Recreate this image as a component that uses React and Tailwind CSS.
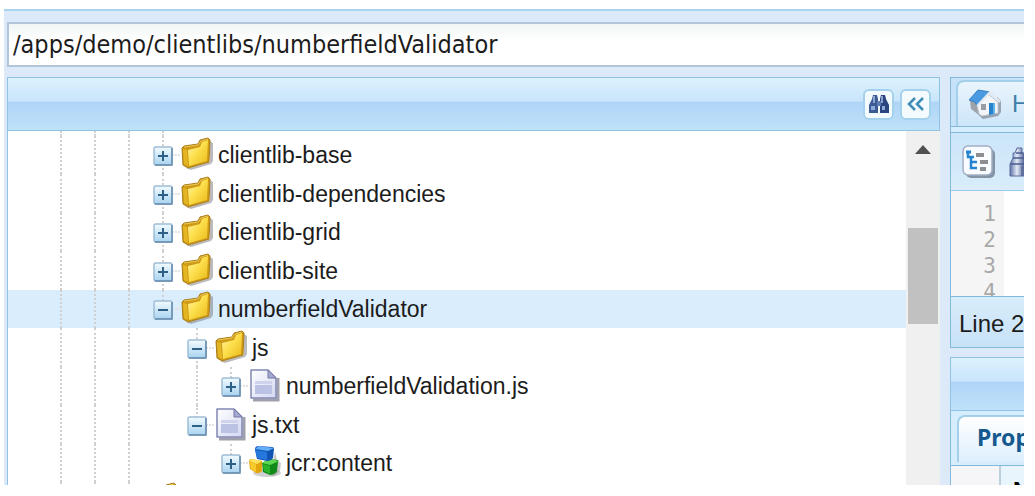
import React from 'react';

const nodes = [
  { id: 'base', name: 'clientlib-base', guides: [1, 1, 1], icon: 'folder', more: true },
  { id: 'deps', name: 'clientlib-dependencies', guides: [1, 1, 1], icon: 'folder', more: true },
  { id: 'grid', name: 'clientlib-grid', guides: [1, 1, 1], icon: 'folder', more: true },
  { id: 'site', name: 'clientlib-site', guides: [1, 1, 1], icon: 'folder', more: true },
  { id: 'nfv', name: 'numberfieldValidator', guides: [1, 1, 1], icon: 'folder', open: true, selected: true },
  { id: 'js', name: 'js', guides: [1, 1, 1, 0], icon: 'folder', open: true, more: true },
  { id: 'nfvjs', name: 'numberfieldValidation.js', guides: [1, 1, 1, 0, 1], icon: 'file' },
  { id: 'jstxt', name: 'js.txt', guides: [1, 1, 1, 0], icon: 'file', open: true },
  { id: 'jcr', name: 'jcr:content', guides: [1, 1, 1, 0, 0], icon: 'cubes' },
];

const FolderIcon = () => (
  <svg width="34" height="36" viewBox="0 0 34 36" className="block">
    <defs>
      <linearGradient id="folderFace" x1="0" y1="0" x2="1" y2="1">
        <stop offset="0" stopColor="#fff6b4" />
        <stop offset="0.45" stopColor="#fde04e" />
        <stop offset="1" stopColor="#e9b818" />
      </linearGradient>
    </defs>
    <path d="M6 31 L11 33 L31 27 L33 24 L33 6 L30 4 L30 25 L9 31 Z" fill="#77777e" opacity="0.5" />
    <path d="M2 11 L4 9 L18 7 L20 3 L28 1 L30 3 L29 25 L8 31 L3 28 Z" fill="#cf9a14" stroke="#a87c18" strokeWidth="1" strokeLinejoin="round" />
    <path d="M3 12 L7 13 L8 29 L4 27 Z" fill="#e5b624" />
    <path d="M8 13 L20 10 L22 5 L28 3 L27 24 L9 29 Z" fill="url(#folderFace)" />
    <path d="M4 10 L18 8 L21 4 L28 2" fill="none" stroke="#e9c75a" strokeWidth="1" />
  </svg>
);

const FileIcon = () => (
  <svg width="34" height="36" viewBox="0 0 34 36" className="block">
    <defs>
      <linearGradient id="page" x1="0" y1="0" x2="1" y2="1">
        <stop offset="0" stopColor="#ffffff" />
        <stop offset="1" stopColor="#d3d7f1" />
      </linearGradient>
    </defs>
    <path d="M5 32 H30 V10" fill="none" stroke="#77778a" strokeWidth="3" opacity="0.7" />
    <path d="M3 2 H20 L28 10 V30 H3 Z" fill="url(#page)" stroke="#8388b2" strokeWidth="1.5" strokeLinejoin="round" />
    <path d="M20 2 V10 H28 Z" fill="#a4a9cf" stroke="#7479a6" strokeWidth="1" />
    <rect x="7" y="13" width="17" height="3" fill="#cfd3ec" />
    <rect x="7" y="17" width="17" height="9" fill="#bcc2e3" />
  </svg>
);

const CubesIcon = () => (
  <svg width="34" height="36" viewBox="0 0 34 36" className="block">
    <ellipse cx="19" cy="28" rx="14" ry="4" fill="#777" opacity="0.35" />
    <path d="M27 7 L29 15 L33 18 L32 26 L26 31 L22 30 Z" fill="#777" opacity="0.4" />
    <path d="M1 16 Q1 14 4 14 L14 16 V26 Q11 29 8 28 L2 24 Z" fill="#e3a60f" />
    <path d="M1 16 L4 14 L14 16 L9 19 Z" fill="#ffe35c" />
    <path d="M2 17 L8 19 L8 27 L3 24 Z" fill="#f9cb2a" />
    <path d="M14 18 L21 14 L30 15 Q31 15 30 17 L29 26 Q28 29 22 30 L15 27 Z" fill="#128a19" />
    <path d="M14 18 L21 14 L31 16 L22 20 Z" fill="#5dd850" />
    <path d="M15 19 L22 21 L22 29 L16 26 Z" fill="#2bb42c" />
    <path d="M7 4 Q7 1 11 1 L24 2 Q26 2 26 4 L25 13 Q23 16 19 16 L9 14 Z" fill="#1355b4" />
    <path d="M7 4 L11 1 L26 3 L20 6 Z" fill="#62adf8" />
    <path d="M7 5 L19 7 L19 15 L9 13 Z" fill="#2579dc" />
  </svg>
);

const icons = { folder: FolderIcon, file: FileIcon, cubes: CubesIcon };

const ExpanderIcon = ({ open }) => (
  <svg width="20" height="20" viewBox="0 0 20 20" className="block">
    <defs>
      <linearGradient id="expander" x1="0" y1="0" x2="0" y2="1">
        <stop offset="0" stopColor="#f2fbff" />
        <stop offset="1" stopColor="#a9d3ef" />
      </linearGradient>
    </defs>
    <rect x="1" y="1" width="18" height="18" rx="1.5" fill="url(#expander)" stroke="#9fbdd6" strokeWidth="1.5" />
    <path d="M2 19 H19 V2" fill="none" stroke="#658bad" strokeWidth="1.5" />
    <path d="M5 10 H15" stroke="#2d5f87" strokeWidth="2" />
    {!open && <path d="M10 5 V15" stroke="#2d5f87" strokeWidth="2" />}
  </svg>
);

const BinocularsIcon = () => (
  <svg width="22" height="22" viewBox="0 0 22 22" className="block shrink-0">
    <path d="M5 2 H9 L10 6 V20 H1 V12 L4 6 Z" fill="#3c5a93" />
    <path d="M13 2 H17 L18 6 L21 12 V20 H12 V6 Z" fill="#2a4580" />
    <path d="M9 8 H13 V13 H9 Z" fill="#5c7db5" />
    <path d="M6 3 V10 M14 3 V10" stroke="#a9c2e6" strokeWidth="1.5" />
    <path d="M3 13 H7 V17 H3 Z M14 13 H17 V17 H14 Z" fill="#8eacd9" />
  </svg>
);

const HomeIcon = () => (
  <svg width="34" height="32" viewBox="0 0 34 32" className="block shrink-0">
    <path d="M4 21 L15 31 L30 28 L33 24 L33 13 L29 9 L29 24 L15 28 Z" fill="#626873" opacity="0.55" />
    <path d="M2 13 L10 12 L13 28 L3 21 Z" fill="#9da2aa" />
    <path d="M9 17 L20 6 L30 14 V25 L14 28 L11 26 Z" fill="#f2f4f7" stroke="#c0c5cc" />
    <path d="M1 12 L10 2 L22 4 L9 18 L7 14 Z" fill="#4a9ae2" stroke="#3a80c2" />
    <path d="M9 18 L22 4 L32 14" fill="none" stroke="#e3e9f0" strokeWidth="2" />
    <rect x="13" y="16" width="5" height="6" fill="#989ca3" />
    <path d="M21 15 L27 15 V26 L21 27 Z" fill="#2582cb" />
    <path d="M25 15 H27 V26 L25 26 Z" fill="#62b2ea" />
  </svg>
);

const TreeViewIcon = () => (
  <svg width="36" height="36" viewBox="0 0 36 36" className="block shrink-0">
    <rect x="5" y="5" width="29" height="29" rx="5" fill="#596579" opacity="0.65" />
    <rect x="2" y="2" width="29" height="29" rx="5" fill="#f8fbff" stroke="#a3aec4" strokeWidth="1.5" />
    <path d="M7 7 V13 H13 M10 13 V24 H16 M10 18 H16" fill="none" stroke="#2583cf" strokeWidth="2.5" />
    <path d="M5 8 H10" stroke="#2583cf" strokeWidth="3" />
    <path d="M15 11 H23 M19 18 H27 M19 25 H25" stroke="#8d8e92" strokeWidth="4" />
  </svg>
);

const TowerIcon = () => (
  <svg width="26" height="32" viewBox="0 0 26 32" className="block shrink-0">
    <defs>
      <linearGradient id="tower" x1="0" y1="0" x2="1" y2="0">
        <stop offset="0" stopColor="#5d72a4" />
        <stop offset="0.3" stopColor="#e4ebf7" />
        <stop offset="0.7" stopColor="#2c3f7c" />
      </linearGradient>
    </defs>
    <path d="M8 2 H13 V7 H15 V13 H24 V30 H13 V20 V30 H1 V18 L4 12 V7 H6 Z" fill="url(#tower)" stroke="#5a6a9a" />
    <path d="M7 7 H14 M4 12 H16 M2 18 H17" stroke="#4a5c93" strokeWidth="1.5" />
  </svg>
);

const Guide = ({ show, half }) => (
  <span className="flex w-[34px] shrink-0 justify-center self-stretch">
    {show ? <span className={`border-l-2 border-dotted border-[#d0d0d0] ${half ? 'h-1/2' : 'h-full'}`} /> : null}
  </span>
);

const TreeRow = ({ node }) => {
  const Icon = icons[node.icon];
  return (
    <li
      role="treeitem"
      aria-selected={Boolean(node.selected)}
      className={`flex h-[38px] items-center pl-9 even:h-[39px] ${node.selected ? 'bg-[#d9edfd]' : ''}`}
    >
      {node.guides.map((g, i) => (
        <Guide key={i} show={g} />
      ))}
      <span className="relative flex w-[34px] shrink-0 items-center justify-center self-stretch">
        <span className="absolute inset-0 flex justify-center">
          <Guide show half={!node.more} />
        </span>
        <span className="absolute right-0 w-2 border-t-2 border-dotted border-[#e2e2e2]" />
        <button type="button" aria-label={`Toggle ${node.name}`} className="relative mt-0.5">
          <ExpanderIcon open={node.open} />
        </button>
      </span>
      <Icon />
      <span className="pl-1 whitespace-nowrap">{node.name}</span>
    </li>
  );
};

const PanelHeader = ({ children }) => (
  <div className="flex h-[54px] items-center justify-end gap-1.5 border border-[#8fc4e6] bg-[linear-gradient(#dcf1fd_0%,#c9e5fb_44%,#afd4f6_47%,#bfe2fa_100%)] pr-2">
    {children}
  </div>
);

const ToolButton = ({ label, children }) => (
  <button
    type="button"
    aria-label={label}
    className="flex size-[31px] items-center justify-center rounded-md border-2 border-[#a4d2ec] bg-[#f4fbff]"
  >
    {children}
  </button>
);

const TreePanel = () => (
  <section className="flex min-w-0 flex-1 flex-col">
    <PanelHeader>
      <ToolButton label="Search">
        <BinocularsIcon />
      </ToolButton>
      <ToolButton label="Collapse">
        <svg width="20" height="20" viewBox="0 0 20 20" fill="none" stroke="#3e8db6" strokeWidth="2.5">
          <path d="M9 4 L3 10 L9 16 M17 4 L11 10 L17 16" />
        </svg>
      </ToolButton>
    </PanelHeader>
    <div className="flex min-h-0 flex-1 border-l border-[#8fc4e6] bg-white">
      <div className="min-w-0 flex-1 overflow-hidden text-[23px] leading-7 text-[#1c1c1c]">
        <div className="flex h-[5px] pl-9">
          <Guide show />
          <Guide show />
          <Guide show />
          <Guide show />
        </div>
        <ul role="tree">
          {nodes.map((node) => (
            <TreeRow key={node.id} node={node} />
          ))}
          <li className="flex pl-9">
            <Guide show />
            <Guide show />
            <Guide show />
            <FolderIcon />
          </li>
        </ul>
      </div>
      <div className="flex w-[34px] shrink-0 flex-col items-center bg-[#f0f0f0]">
        <svg width="18" height="10" viewBox="0 0 18 10" className="mt-3.5 mb-[73px] shrink-0">
          <path d="M9 0 L17 9 H1 Z" fill="#505050" />
        </svg>
        <div className="h-24 w-[30px] shrink-0 bg-[#c1c1c1]" />
      </div>
    </div>
  </section>
);

const EditorPanel = () => (
  <section className="flex h-[271px] shrink-0 flex-col border border-r-0 border-[#82b9dc] bg-[#d3e9fa]">
    <div className="flex h-[55px] shrink-0 flex-col border-b border-[#82b9dc] bg-[#d5edfc]">
      <div className="flex h-[49px] border-b border-[#82b9dc] bg-[#c6e2f8] pt-0.5 pl-[5px]">
        <button
          type="button"
          className="flex items-center gap-2.5 rounded-tl-lg border-t-2 border-l-2 border-[#a3cfeb] bg-linear-to-b from-[#eaf5fd] to-[#cde5f9] pl-2.5 text-[24px] text-[#3f7fa8]"
        >
          <HomeIcon />
          Home
        </button>
      </div>
    </div>
    <div className="flex h-[58px] shrink-0 items-center gap-3 border-b border-[#9bcbe8] bg-linear-to-b from-[#cbe5f9] to-[#d9edfb] pl-2.5">
      <button type="button" aria-label="Outline">
        <TreeViewIcon />
      </button>
      <button type="button" aria-label="Find">
        <TowerIcon />
      </button>
    </div>
    <div className="min-h-0 flex-1 overflow-hidden bg-white">
      <ol className="h-full w-[53px] bg-[#f5f5f5] pt-2.5 pr-2 text-right font-['DejaVu_Sans_Mono',monospace] text-[21px] leading-[26px] text-[#a8a8a8]">
        <li>1</li>
        <li>2</li>
        <li>3</li>
        <li>4</li>
      </ol>
    </div>
    <div className="flex h-[51px] shrink-0 items-center border-t border-[#82b9dc] bg-linear-to-b from-[#d8edfb] to-[#c7e1f7] pt-1 pl-2 text-[24px] whitespace-nowrap text-[#1c1c1c]">
      Line 2
    </div>
  </section>
);

const PropertiesPanel = () => (
  <section className="flex min-h-0 flex-1 flex-col overflow-hidden">
    <div className="-mr-1 shrink-0">
      <PanelHeader />
    </div>
    <div className="flex min-h-0 flex-1 flex-col border-l border-[#82b9dc]">
      <div className="flex h-[55px] shrink-0 items-start border-b border-[#82b9dc] bg-[#d5edfc] pt-1 pl-1.5">
        <button
          type="button"
          className="h-[47px] rounded-tl-lg border-t-2 border-l-2 border-[#a3cfeb] bg-linear-to-b from-white to-[#ddeffc] pb-1.5 pl-[18px] font-['Noto_Sans',sans-serif] text-[23px] leading-7 font-bold text-[#15598f]"
        >
          Properties
        </button>
      </div>
      <div className="flex flex-1 bg-[#e9f5fd] text-[23px] font-bold">
        <div className="w-[50px] shrink-0 border-r-2 border-[#bccfdd] bg-[#f6f6f9]" />
        <div className="pt-2 pl-3">Name</div>
      </div>
    </div>
  </section>
);

export default function App() {
  return (
    <div className="h-screen bg-white pt-[9px] pr-[11px] pb-[11px] pl-1 font-['Liberation_Sans',Arial,sans-serif]">
      <main className="flex h-full flex-col overflow-hidden border-t-2 border-[#a8d3ec] bg-[#dbe9f9] pl-[3px]">
        <input
          type="text"
          aria-label="Path"
          defaultValue="/apps/demo/clientlibs/numberfieldValidator"
          className="mt-[11px] mb-2.5 h-[45px] w-full shrink-0 border-y-2 border-l-2 border-[#b3c5d9] bg-linear-to-b from-[#f1f6f5] to-white to-40% px-1 font-['DejaVu_Sans_Condensed','DejaVu_Sans',sans-serif] text-[25px] text-[#1c1c1c] outline-none"
        />
        <div className="flex min-h-0 flex-1 gap-2.5">
          <TreePanel />
          <div className="flex w-[74px] shrink-0 flex-col gap-[9px] overflow-hidden">
            <EditorPanel />
            <PropertiesPanel />
          </div>
        </div>
      </main>
    </div>
  );
}
